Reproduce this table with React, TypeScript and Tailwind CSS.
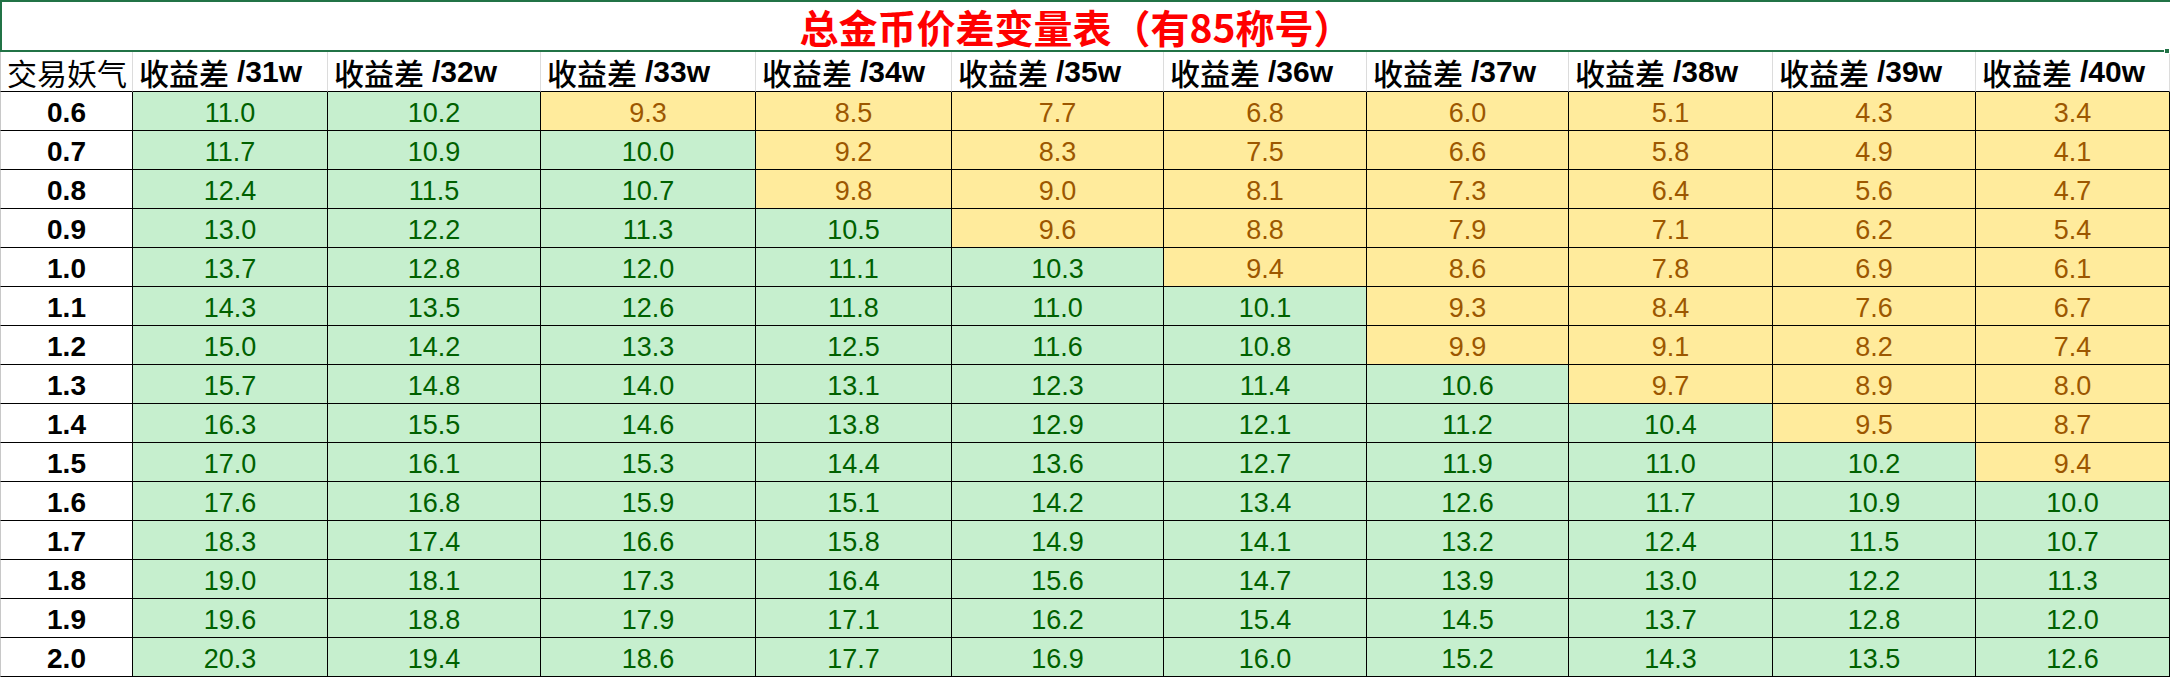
import React from "react";

const data: number[][] = [
  [11.0, 10.2, 9.3, 8.5, 7.7, 6.8, 6.0, 5.1, 4.3, 3.4],
  [11.7, 10.9, 10.0, 9.2, 8.3, 7.5, 6.6, 5.8, 4.9, 4.1],
  [12.4, 11.5, 10.7, 9.8, 9.0, 8.1, 7.3, 6.4, 5.6, 4.7],
  [13.0, 12.2, 11.3, 10.5, 9.6, 8.8, 7.9, 7.1, 6.2, 5.4],
  [13.7, 12.8, 12.0, 11.1, 10.3, 9.4, 8.6, 7.8, 6.9, 6.1],
  [14.3, 13.5, 12.6, 11.8, 11.0, 10.1, 9.3, 8.4, 7.6, 6.7],
  [15.0, 14.2, 13.3, 12.5, 11.6, 10.8, 9.9, 9.1, 8.2, 7.4],
  [15.7, 14.8, 14.0, 13.1, 12.3, 11.4, 10.6, 9.7, 8.9, 8.0],
  [16.3, 15.5, 14.6, 13.8, 12.9, 12.1, 11.2, 10.4, 9.5, 8.7],
  [17.0, 16.1, 15.3, 14.4, 13.6, 12.7, 11.9, 11.0, 10.2, 9.4],
  [17.6, 16.8, 15.9, 15.1, 14.2, 13.4, 12.6, 11.7, 10.9, 10.0],
  [18.3, 17.4, 16.6, 15.8, 14.9, 14.1, 13.2, 12.4, 11.5, 10.7],
  [19.0, 18.1, 17.3, 16.4, 15.6, 14.7, 13.9, 13.0, 12.2, 11.3],
  [19.6, 18.8, 17.9, 17.1, 16.2, 15.4, 14.5, 13.7, 12.8, 12.0],
  [20.3, 19.4, 18.6, 17.7, 16.9, 16.0, 15.2, 14.3, 13.5, 12.6],
];

const labels = ["0.6", "0.7", "0.8", "0.9", "1.0", "1.1", "1.2", "1.3", "1.4", "1.5", "1.6", "1.7", "1.8", "1.9", "2.0"];
const heads = [31, 32, 33, 34, 35, 36, 37, 38, 39, 40];

const cjk = "font-['Noto_Sans_CJK_SC','Noto_Sans',sans-serif]";
const lat = "font-['Liberation_Sans','Noto_Sans_CJK_SC',sans-serif]";

export default function App() {
  return (
    <div className="w-[2170px] h-[677px] bg-white overflow-hidden">
      <div className="grid grid-cols-[133px_195px_213px_215px_196px_212px_203px_202px_204px_203px_194px] grid-rows-[52px_40px_repeat(15,39px)]">
        {/* Title */}
        <div className="relative col-span-11 flex items-center justify-center border-t-2 border-b-2 border-l-2 border-[#217346] pr-[20px]">
          <span className={`${cjk} text-[39px] font-bold text-[#ff0000] leading-none whitespace-nowrap`}>
            总金币价差变量表（有85称号）
          </span>
          <div className="absolute right-[0px] bottom-[-4px] w-[6px] h-[6px] bg-[#217346] border border-white" />
        </div>

        {/* Header */}
        <div className={`${cjk} flex items-center pl-[6px] text-[30px] text-black leading-[38px] border-l border-l-[#c8c8c8] border-r border-r-[#dcdcdc] border-b border-b-black whitespace-nowrap`}>
          交易妖气
        </div>
        {heads.map((h) => (
          <div
            key={h}
            className="flex items-center pl-[6px] leading-[38px] border-r border-r-[#dcdcdc] border-b border-b-black whitespace-nowrap"
          >
            <span className={`${cjk} text-[30px] text-black font-medium`}>收益差</span>
            <span className={`${lat} text-[30px] text-black font-bold ml-[8px]`}>/{h}w</span>
          </div>
        ))}

        {/* Rows */}
        {data.map((row, ri) => (
          <React.Fragment key={ri}>
            <div
              className={`${lat} flex items-center justify-center pt-[4px] text-[28px] font-bold text-black leading-none border-l border-l-[#c8c8c8] border-r border-r-black border-b border-b-black`}
            >
              {labels[ri]}
            </div>
            {row.map((v, ci) => {
              const good = v >= 10;
              return (
                <div
                  key={ci}
                  className={`${lat} flex items-center justify-center pt-[4px] text-[27px] leading-none border-r border-b border-black ${
                    good ? "bg-[#c6efce] text-[#006100]" : "bg-[#ffeb9c] text-[#9c5700]"
                  }`}
                >
                  {v.toFixed(1)}
                </div>
              );
            })}
          </React.Fragment>
        ))}
      </div>
    </div>
  );
}
